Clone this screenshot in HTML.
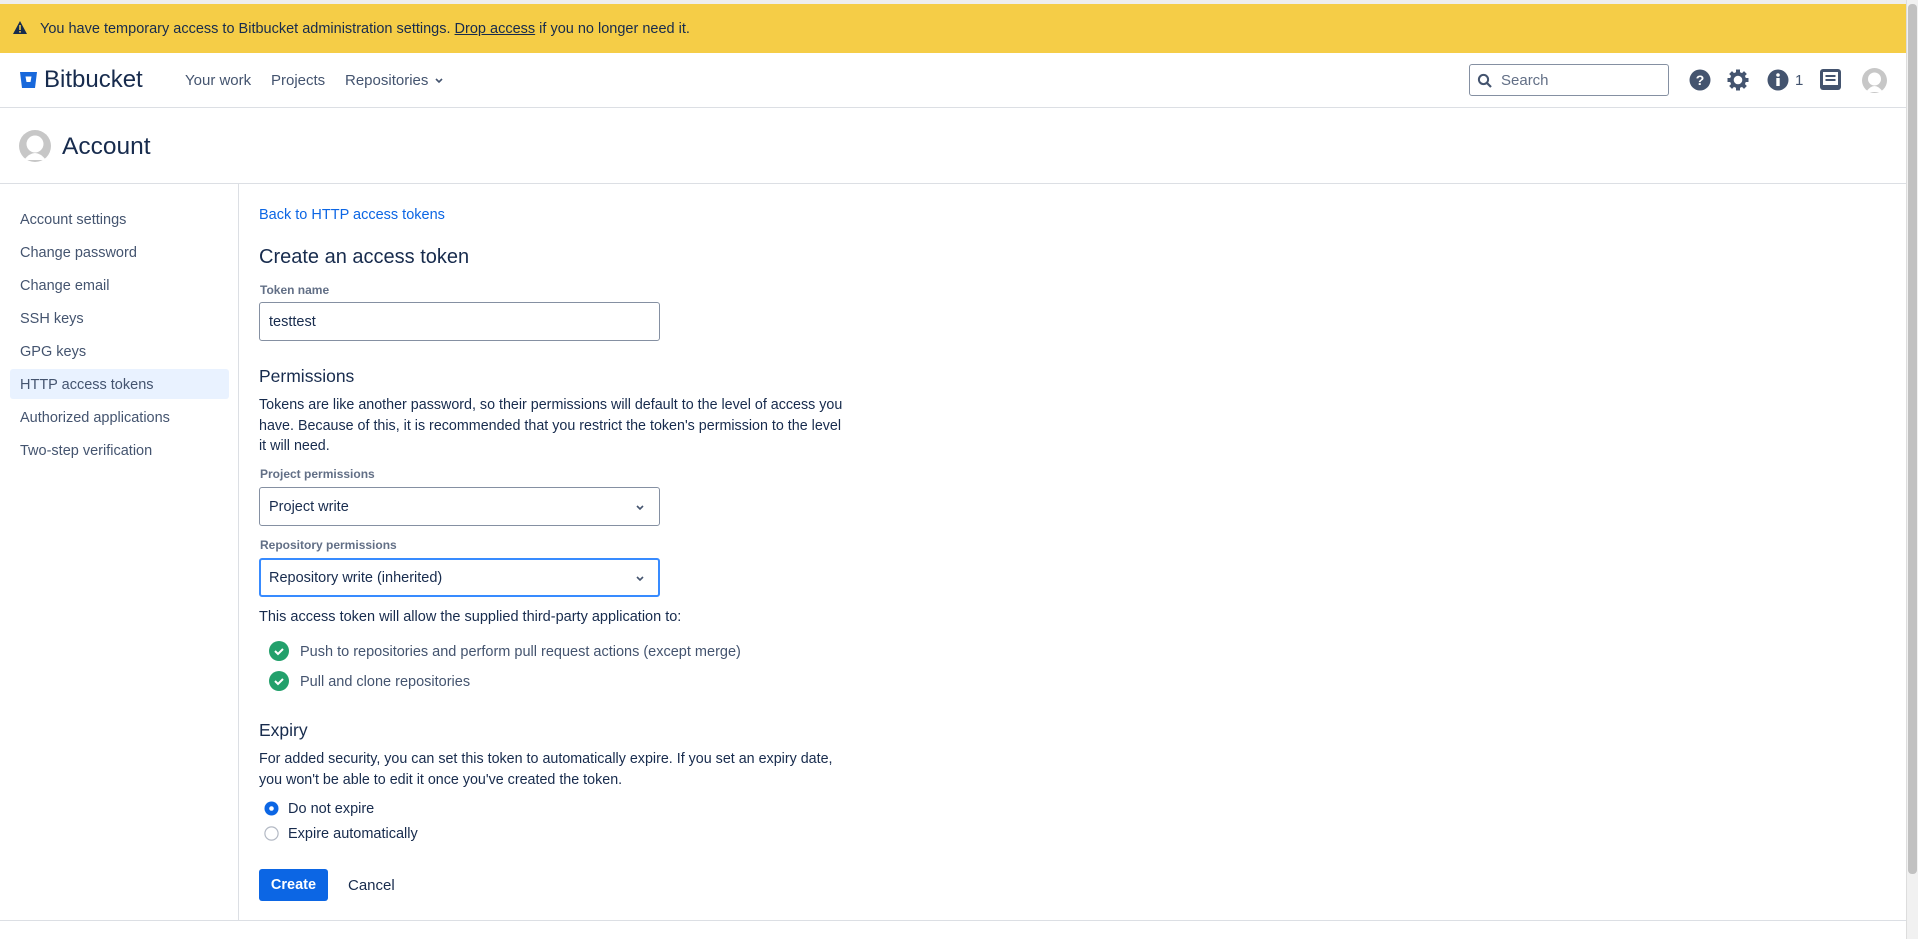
<!DOCTYPE html>
<html><head><meta charset="utf-8"><style>
*{margin:0;padding:0;box-sizing:border-box}
body{width:1918px;height:939px;overflow:hidden;background:#fff;font-family:"Liberation Sans",sans-serif;color:#172b4d;position:relative;font-size:14.5px}
.a{position:absolute;white-space:nowrap;line-height:20px}
.side{color:#44546f;font-size:14.5px}
.lbl{font-size:12px;font-weight:bold;color:#626f86}
.inp{position:absolute;left:259px;width:401px;border:1px solid #8590a2;border-radius:3px;background:#fff;padding-left:9px;font-size:14.5px;line-height:39px}
.chev{position:absolute;right:14px;top:16px}
</style></head><body>
<div style="position:absolute;left:0;top:0;width:1918px;height:4px;background:#eee"></div>
<div style="position:absolute;left:0;top:4px;width:1906px;height:49px;background:#f5cd47"></div>
<svg class="a" style="left:13px;top:21px" width="14" height="13" viewBox="0 0 14 13"><path d="M7 0L14 13H0Z" fill="#172b4d"/><rect x="6.2" y="4" width="1.6" height="5" fill="#f5cd47"/><rect x="6.2" y="10" width="1.6" height="1.6" fill="#f5cd47"/></svg>
<div class="a" style="left:40px;top:19px;font-size:14.5px">You have temporary access to Bitbucket administration settings. <u>Drop access</u> if you no longer need it.</div>
<div style="position:absolute;left:1906px;top:0;width:12px;height:939px;background:#f1f1f1;border-left:1px solid #ddd"></div>
<div style="position:absolute;left:1908px;top:4px;width:9px;height:870px;background:#c1c1c1;border-radius:4px"></div>
<div style="position:absolute;left:0;top:107px;width:1906px;height:1px;background:#dcdfe4"></div>
<svg class="a" style="left:20px;top:72px" width="17" height="16" viewBox="0 0 17 16"><path d="M0 0H17L15 16H2Z" fill="#1868db"/><path d="M5.5 4.5H11.5L10.5 10H6.5Z" fill="#fff"/></svg>
<div class="a" style="left:44px;top:66px;font-size:24px;line-height:28px;color:#172b4d">Bitbucket</div>
<div class="a" style="left:185px;top:71px;font-size:15px;color:#44546f">Your work</div>
<div class="a" style="left:271px;top:71px;font-size:15px;color:#44546f">Projects</div>
<div class="a" style="left:345px;top:71px;font-size:15px;color:#44546f">Repositories</div>
<svg class="a" style="left:434px;top:77px" width="10" height="8"><path d="M2 2l3 3 3-3" stroke="#44546f" stroke-width="1.6" fill="none"/></svg>
<div style="position:absolute;left:1469px;top:64px;width:200px;height:32px;border:1px solid #8590a2;border-radius:3px"></div>
<svg class="a" style="left:1477px;top:73px" width="16" height="16"><circle cx="6.5" cy="6.5" r="4.6" stroke="#44546f" stroke-width="2" fill="none"/><path d="M10 10l4 4" stroke="#44546f" stroke-width="2.2"/></svg>
<div class="a" style="left:1501px;top:71px;font-size:15px;color:#626f86">Search</div>
<svg class="a" style="left:1689px;top:69px" width="22" height="22"><circle cx="11" cy="11" r="10.5" fill="#44546f"/><text x="11" y="16" text-anchor="middle" fill="#fff" font-size="14" font-weight="bold" font-family="Liberation Sans">?</text></svg>
<svg class="a" style="left:1727px;top:69px" width="22" height="22" viewBox="0 0 22 22"><g fill="#44546f"><circle cx="11" cy="11" r="8"/><rect x="9" y="0.5" width="4" height="21"/><rect x="0.5" y="9" width="21" height="4"/><rect x="9" y="0.5" width="4" height="21" transform="rotate(45 11 11)"/><rect x="9" y="0.5" width="4" height="21" transform="rotate(-45 11 11)"/></g><circle cx="11" cy="11" r="4.3" fill="#fff"/></svg>
<svg class="a" style="left:1767px;top:69px" width="22" height="22"><circle cx="11" cy="11" r="10.5" fill="#44546f"/><circle cx="11" cy="6" r="1.8" fill="#fff"/><rect x="9.3" y="9" width="3.4" height="8" fill="#fff"/></svg>
<div class="a" style="left:1795px;top:71px;font-size:15px;color:#44546f">1</div>
<svg class="a" style="left:1820px;top:69px" width="21" height="22"><rect x="0" y="0" width="21" height="21" rx="3" fill="#44546f"/><rect x="3" y="3" width="15" height="13" fill="#fff"/><rect x="5.5" y="6" width="10" height="2" fill="#44546f"/><rect x="5.5" y="10" width="10" height="2" fill="#44546f"/></svg>
<svg class="a" style="left:1862px;top:68px" width="25" height="25"><circle cx="12.5" cy="12.5" r="12.5" fill="#c7c7c7"/><circle cx="12.5" cy="11" r="6.5" fill="#fff"/><path d="M4 24Q12.5 12 21 24Z" fill="#fff"/></svg>
<svg class="a" style="left:19px;top:130px" width="32" height="32"><circle cx="16" cy="16" r="16" fill="#c7c7c7"/><circle cx="16" cy="14" r="8.5" fill="#fff"/><path d="M5 30Q16 16 27 30Z" fill="#fff"/></svg>
<div class="a" style="left:62px;top:132px;font-size:24.5px;line-height:30px;color:#172b4d">Account</div>
<div style="position:absolute;left:0;top:183px;width:1906px;height:1px;background:#dcdfe4"></div>
<div style="position:absolute;left:238px;top:183px;width:1px;height:737px;background:#dcdfe4"></div>
<div style="position:absolute;left:0;top:920px;width:1906px;height:1px;background:#dcdfe4"></div>
<div style="position:absolute;left:10px;top:369px;width:219px;height:30px;background:#e9f2ff;border-radius:3px"></div>
<div class="a side" style="left:20px;top:210px">Account settings</div>
<div class="a side" style="left:20px;top:243px">Change password</div>
<div class="a side" style="left:20px;top:276px">Change email</div>
<div class="a side" style="left:20px;top:309px">SSH keys</div>
<div class="a side" style="left:20px;top:342px">GPG keys</div>
<div class="a side" style="left:20px;top:375px">HTTP access tokens</div>
<div class="a side" style="left:20px;top:408px">Authorized applications</div>
<div class="a side" style="left:20px;top:441px">Two-step verification</div>
<div class="a" style="left:259px;top:205px;color:#0c66e4;font-size:14.5px">Back to HTTP access tokens</div>
<div class="a" style="left:259px;top:245px;font-size:20px;line-height:24px">Create an access token</div>
<div class="a lbl" style="left:260px;top:280px">Token name</div>
<div class="inp" style="top:302px;height:39px">testtest</div>
<div class="a" style="left:259px;top:365px;font-size:17.5px;line-height:22px">Permissions</div>
<div class="a" style="left:259px;top:395px;font-size:14.3px;line-height:20.5px">Tokens are like another password, so their permissions will default to the level of access you<br>have. Because of this, it is recommended that you restrict the token's permission to the level<br>it will need.</div>
<div class="a lbl" style="left:260px;top:464px">Project permissions</div>
<div class="inp" style="top:487px;height:39px">Project write<svg class="chev" width="10" height="8"><path d="M2 2l3 3 3-3" stroke="#44546f" stroke-width="1.6" fill="none"/></svg></div>
<div class="a lbl" style="left:260px;top:535px">Repository permissions</div>
<div class="inp" style="top:558px;height:39px;border:2px solid #388bff;line-height:37px;padding-left:8px">Repository write (inherited)<svg class="chev" style="right:13px;top:15px" width="10" height="8"><path d="M2 2l3 3 3-3" stroke="#44546f" stroke-width="1.6" fill="none"/></svg></div>
<div class="a" style="left:259px;top:607px">This access token will allow the supplied third-party application to:</div>
<svg class="a" style="left:269px;top:641px" width="20" height="20"><circle cx="10" cy="10" r="10" fill="#22a06b"/><path d="M6 10l3 3 5-5" stroke="#fff" stroke-width="2" fill="none"/></svg>
<div class="a" style="left:300px;top:642px;color:#44546f">Push to repositories and perform pull request actions (except merge)</div>
<svg class="a" style="left:269px;top:671px" width="20" height="20"><circle cx="10" cy="10" r="10" fill="#22a06b"/><path d="M6 10l3 3 5-5" stroke="#fff" stroke-width="2" fill="none"/></svg>
<div class="a" style="left:300px;top:672px;color:#44546f">Pull and clone repositories</div>
<div class="a" style="left:259px;top:719px;font-size:17.5px;line-height:22px">Expiry</div>
<div class="a" style="left:259px;top:749px;font-size:14.3px;line-height:20.5px">For added security, you can set this token to automatically expire. If you set an expiry date,<br>you won't be able to edit it once you've created the token.</div>
<svg class="a" style="left:264px;top:801px" width="15" height="15"><circle cx="7.5" cy="7.5" r="7" fill="#0c66e4"/><circle cx="7.5" cy="7.5" r="2.3" fill="#fff"/></svg>
<div class="a" style="left:288px;top:799px">Do not expire</div>
<svg class="a" style="left:264px;top:826px" width="15" height="15"><circle cx="7.5" cy="7.5" r="6.6" fill="#fff" stroke="#b3b9c4" stroke-width="1.2"/></svg>
<div class="a" style="left:288px;top:824px">Expire automatically</div>
<div style="position:absolute;left:259px;top:869px;width:69px;height:32px;background:#0c66e4;border-radius:3px;color:#fff;font-weight:bold;font-size:14.5px;line-height:33px;text-align:center">Create</div>
<div class="a" style="left:348px;top:876px;color:#172b4d;font-size:15px">Cancel</div>
</body></html>
